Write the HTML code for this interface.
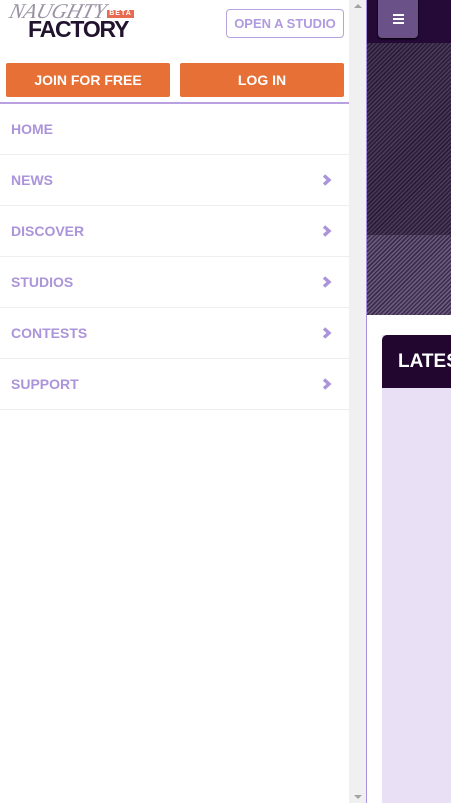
<!DOCTYPE html>
<html><head><meta charset="utf-8"><style>
*{margin:0;padding:0;box-sizing:border-box}
body{width:451px;height:803px;overflow:hidden;background:#fff;font-family:"Liberation Sans",sans-serif;position:relative}
.left{position:absolute;left:0;top:0;width:349px;height:803px;background:#fff}
.sb{position:absolute;left:349px;top:0;width:17px;height:803px;background:#f0f0f0}
.sb:before{content:"";position:absolute;left:5px;top:4px;border:4px solid transparent;border-bottom:4px solid #a3a3a3;border-top:0}
.sb:after{content:"";position:absolute;left:5px;bottom:4px;border:4px solid transparent;border-top:4px solid #a3a3a3;border-bottom:0}
.bl{position:absolute;left:366px;top:0;width:1px;height:803px;background:#a88fe0}
.right{position:absolute;left:367px;top:0;width:84px;height:803px;background:#fff}
.top{position:absolute;left:0;top:0;width:84px;height:43px;background:#250a38}
.burger{position:absolute;left:11px;top:0;width:40px;height:38px;background:#6a5288;border-radius:0 0 4px 4px;box-shadow:0 1px 2px #000}
.burger i{position:absolute;left:15px;width:11px;height:2px;background:#fff}
.h1{position:absolute;left:0;top:43px;width:84px;height:192px;background:repeating-linear-gradient(-45deg,#4a3a5a 0 1.5px,#2a1c36 1.5px 3px)}
.h2{position:absolute;left:0;top:235px;width:84px;height:80px;background:repeating-linear-gradient(-45deg,#6b5a7e 0 1.5px,#3a2c48 1.5px 3px)}
.card{position:absolute;left:15px;top:335px;width:80px;height:468px;background:#e9e0f6}
.ch{position:absolute;left:0;top:0;width:80px;height:53px;background:#22062f;border-radius:5px 0 0 0;color:#fff;font-weight:bold;font-size:19px;padding:16px 0 0 16px}
.logo1{position:absolute;left:10px;top:-1px;font-family:"Liberation Serif",serif;font-style:italic;font-size:21px;color:#9a92a4;letter-spacing:0px;transform:skewX(-15deg)}
.beta{position:absolute;left:107px;top:10px;width:27px;height:8px;background:#e86a50;color:#fff;font-size:7px;font-weight:bold;text-align:center;line-height:8px;letter-spacing:1px}
.logo2{position:absolute;left:28px;top:17px;font-size:23px;font-weight:900;color:#22142f;letter-spacing:-1.2px;line-height:24px}
.open{position:absolute;left:226px;top:9px;width:118px;height:29px;border:1px solid #b7a3e0;border-radius:4px;color:#b09ae0;font-size:13px;font-weight:bold;text-align:center;line-height:27px}
.btn{position:absolute;top:63px;height:34px;background:#e67036;border-radius:2px;color:#fff;font-weight:bold;font-size:14px;text-align:center;line-height:34px}
.line{position:absolute;left:0;top:102px;width:349px;height:2px;background:#b9a0e0}
.menu{position:absolute;left:0;top:104px;width:349px}
.menu div{height:51px;border-bottom:1px solid #efedf2;color:#ab94d9;font-weight:bold;font-size:14px;line-height:50px;padding-left:11px;position:relative}
.menu svg{position:absolute;left:322px;top:19px}
</style></head><body>
<div class="left">
<div class="logo1">NAUGHTY</div>
<div class="beta">BETA</div>
<div class="logo2">FACTORY</div>
<div class="open">OPEN A STUDIO</div>
<div class="btn" style="left:6px;width:164px">JOIN FOR FREE</div>
<div class="btn" style="left:180px;width:164px">LOG IN</div>
<div class="line"></div>
<div class="menu">
<div>HOME</div>
<div>NEWS<svg width="10" height="12" viewBox="0 0 10 12"><path d="M2 1.5l5 4.5-5 4.5" stroke="#ab94d9" stroke-width="3.4" fill="none"/></svg></div>
<div>DISCOVER<svg width="10" height="12" viewBox="0 0 10 12"><path d="M2 1.5l5 4.5-5 4.5" stroke="#ab94d9" stroke-width="3.4" fill="none"/></svg></div>
<div>STUDIOS<svg width="10" height="12" viewBox="0 0 10 12"><path d="M2 1.5l5 4.5-5 4.5" stroke="#ab94d9" stroke-width="3.4" fill="none"/></svg></div>
<div>CONTESTS<svg width="10" height="12" viewBox="0 0 10 12"><path d="M2 1.5l5 4.5-5 4.5" stroke="#ab94d9" stroke-width="3.4" fill="none"/></svg></div>
<div>SUPPORT<svg width="10" height="12" viewBox="0 0 10 12"><path d="M2 1.5l5 4.5-5 4.5" stroke="#ab94d9" stroke-width="3.4" fill="none"/></svg></div>
</div>
</div>
<div class="sb"></div>
<div class="bl"></div>
<div class="right">
<div class="top"><div class="burger"><i style="top:14px"></i><i style="top:18px"></i><i style="top:22px"></i></div></div>
<div class="h1"></div>
<div class="h2"></div>
<div class="card"><div class="ch">LATEST</div></div>
</div>
</body></html>
